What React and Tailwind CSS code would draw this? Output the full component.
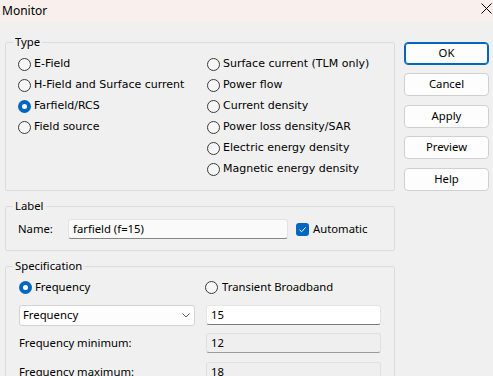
import React from "react";

const seg = "font-['Noto_Sans',sans-serif] text-[11.3px]";
const tah = "font-['DejaVu_Sans',sans-serif] text-[11px]";

function Radio({ checked, label, font, gap = "ml-[3px]" }) {
  return (
    <div className="flex items-center h-[21px]">
      {checked ? (
        <span className="w-[13px] h-[13px] rounded-full bg-[#0067c0] flex items-center justify-center shrink-0">
          <span className="w-[5px] h-[5px] rounded-full bg-white" />
        </span>
      ) : (
        <span className="w-[13px] h-[13px] rounded-full border border-[#3a3a3a] bg-[#f6f6f6] shrink-0" />
      )}
      <span className={font + " " + gap + " text-black whitespace-nowrap"}>{label}</span>
    </div>
  );
}

function Button({ label, primary, className }) {
  return (
    <div
      className={
        "h-[23px] w-[85px] rounded-[4px] bg-[#fdfdfd] flex items-center justify-center text-black " +
        seg +
        " " +
        (primary ? "border border-[#0067c0] shadow-[inset_0_0_0_1px_#0067c0]" : "border border-[#d0d0d0]") +
        " " +
        className
      }
    >
      {label}
    </div>
  );
}

function Group({ title, className, children }) {
  return (
    <fieldset className={"border border-[#dcdcdc] rounded-[2px] " + className}>
      <legend className={"ml-[7px] px-[2px] leading-[14px] text-black " + seg}>{title}</legend>
      {children}
    </fieldset>
  );
}

export default function App() {
  return (
    <div className="w-[493px] h-[376px] bg-[#f0f0f0] overflow-hidden flex flex-col">
      <div className="h-[22px] shrink-0 bg-[#f9f0ee] flex items-center justify-between pl-[2px] pr-[1px]">
        <span className={"text-black " + seg + " text-[12px]"}>Monitor</span>
        <svg width="11" height="11" viewBox="0 0 11 11" className="mb-[5px]">
          <path d="M0.5 0.5 L10.5 10.5 M10.5 0.5 L0.5 10.5" stroke="#000" strokeWidth="1" />
        </svg>
      </div>
      <div className="flex pl-[5px]">
        <div className="w-[390px] flex flex-col shrink-0 mt-[13px]">
          <Group title="Type">
            <div className="flex pt-[5px] pb-[10px] pl-[12px]">
              <div className="w-[189px] flex flex-col">
                <Radio font={tah} label="E-Field" />
                <Radio font={tah} label="H-Field and Surface current" />
                <Radio font={tah} label="Farfield/RCS" checked />
                <Radio font={tah} label="Field source" />
              </div>
              <div className="flex flex-col">
                <Radio font={tah} label="Surface current (TLM only)" />
                <Radio font={tah} label="Power flow" />
                <Radio font={tah} label="Current density" />
                <Radio font={tah} label="Power loss density/SAR" />
                <Radio font={tah} label="Electric energy density" />
                <Radio font={tah} label="Magnetic energy density" />
              </div>
            </div>
          </Group>
          <Group title="Label" className="mt-[8px]">
            <div className="flex items-center pt-[6px] pb-[11px] pl-[12px]">
              <span className={"w-[50px] text-black " + seg}>Name:</span>
              <div className={"w-[220px] h-[20px] bg-[#fafafa] border border-[#e3e3e3] border-b-[#868686] rounded-[3px] flex items-center pl-[4px] text-black " + seg}>
                farfield (f=15)
              </div>
              <span className="ml-[8px] w-[13px] h-[13px] rounded-[3px] bg-[#0067c0] flex items-center justify-center">
                <svg width="9" height="9" viewBox="0 0 9 9">
                  <path d="M1.5 4.8 L3.6 6.8 L7.6 2.4" fill="none" stroke="#fff" strokeWidth="1" />
                </svg>
              </span>
              <span className={"ml-[4px] text-black " + seg}>Automatic</span>
            </div>
          </Group>
          <Group title="Specification" className="mt-[8px] h-[200px]">
            <div className="flex flex-col pt-[4px] pl-[13px]">
              <div className="flex">
                <div className="w-[186px]">
                  <Radio font={seg} label="Frequency" checked />
                </div>
                <Radio font={seg} label="Transient Broadband" gap="ml-[4px]" />
              </div>
              <div className="flex items-start mt-[7px]">
                <div className={"w-[176px] h-[21px] bg-[#fdfdfd] border border-[#d3d3d3] rounded-[3px] flex items-center justify-between pl-[3px] pr-[4px] text-black " + seg}>
                  <span>Frequency</span>
                  <svg width="8" height="5" viewBox="0 0 8 5">
                    <path d="M0.5 0.5 L4 4 L7.5 0.5" fill="none" stroke="#606060" strokeWidth="1" />
                  </svg>
                </div>
                <div className={"ml-[11px] w-[175px] h-[20px] bg-white border border-[#e5e5e5] border-b-[#7a7a7a] rounded-[3px] flex items-center pl-[4px] text-black " + seg}>
                  15
                </div>
              </div>
              <div className="flex items-center mt-[7px]">
                <span className={"w-[187px] text-black " + seg}>Frequency minimum:</span>
                <div className={"w-[175px] h-[20px] bg-[#efefef] border border-[#e0e0e0] border-b-[#9a9a9a] rounded-[3px] flex items-center pl-[4px] text-black " + seg}>
                  12
                </div>
              </div>
              <div className="flex items-center mt-[9px]">
                <span className={"w-[187px] text-black " + seg}>Frequency maximum:</span>
                <div className={"w-[175px] h-[20px] bg-[#efefef] border border-[#e0e0e0] border-b-[#9a9a9a] rounded-[3px] flex items-center pl-[4px] text-black " + seg}>
                  18
                </div>
              </div>
            </div>
          </Group>
        </div>
        <div className="flex flex-col ml-[9px] mt-[20px]">
          <Button label="OK" primary className="" />
          <Button label="Cancel" className="mt-[8px]" />
          <Button label="Apply" className="mt-[9px]" />
          <Button label="Preview" className="mt-[8px]" />
          <Button label="Help" className="mt-[9px]" />
        </div>
      </div>
    </div>
  );
}
